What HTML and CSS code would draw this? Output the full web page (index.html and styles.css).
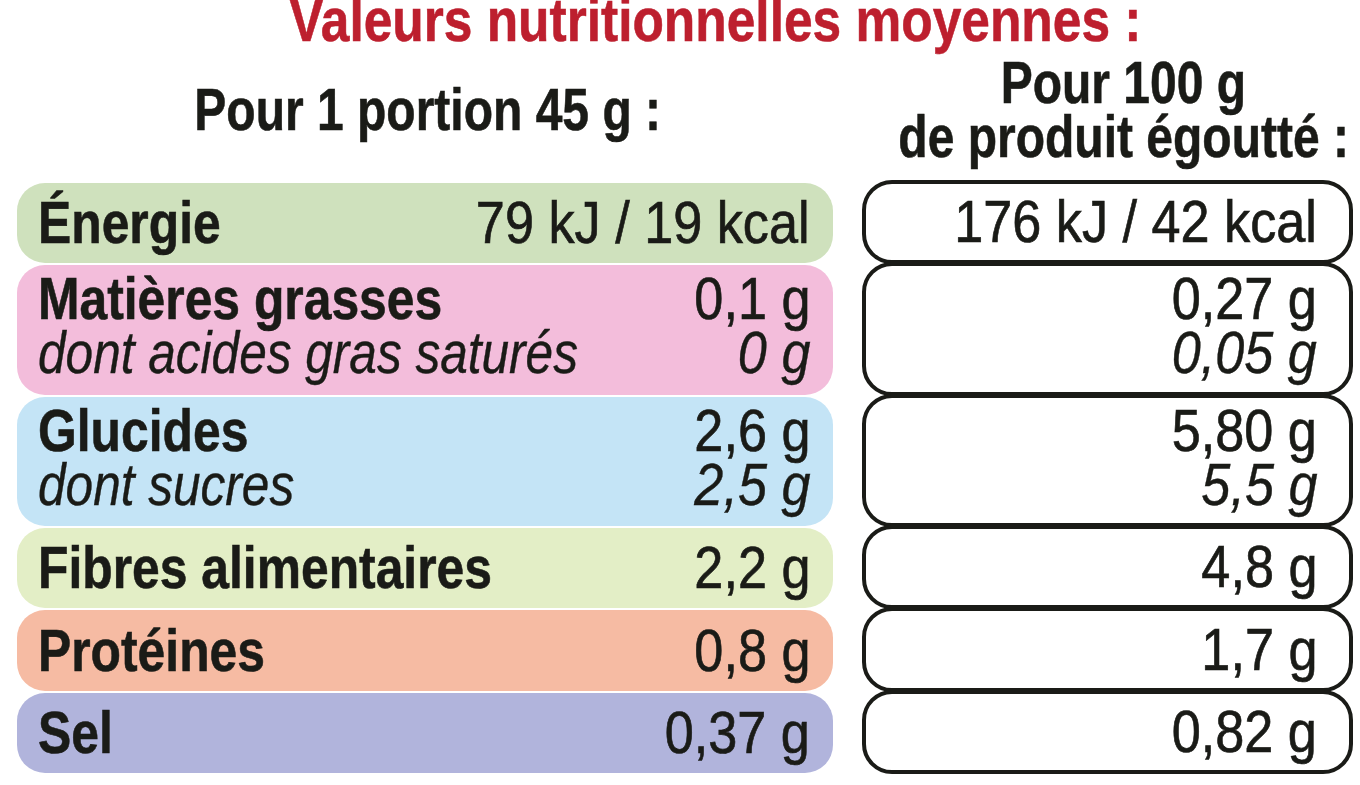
FILE: index.html
```html
<!DOCTYPE html>
<html lang="fr">
<head>
<meta charset="utf-8">
<title>Valeurs nutritionnelles moyennes</title>
<link rel="stylesheet" href="styles.css">
</head>
<body>
<div class="page">
  <div class="title"><span class="title-text">Valeurs nutritionnelles moyennes :</span></div>
  <div class="table">
    <div class="head head-left"><span class="head-line">Pour 1 portion 45 g :</span></div>
    <div class="head head-right">
      <span class="head-line">Pour 100 g</span>
      <span class="head-line">de produit égoutté :</span>
    </div>

    <div class="pill energy">
      <div class="line"><span class="lbl">Énergie</span><span class="val">79 kJ / 19 kcal</span></div>
    </div>
    <div class="box">
      <div class="line"><span class="val">176 kJ / 42 kcal</span></div>
    </div>

    <div class="pill fat double">
      <div class="line"><span class="lbl">Matières grasses</span><span class="val">0,1 g</span></div>
      <div class="line sub"><span class="lbl">dont acides gras saturés</span><span class="val">0 g</span></div>
    </div>
    <div class="box double">
      <div class="line"><span class="val">0,27 g</span></div>
      <div class="line sub"><span class="val">0,05 g</span></div>
    </div>

    <div class="pill carbs double">
      <div class="line"><span class="lbl">Glucides</span><span class="val">2,6 g</span></div>
      <div class="line sub"><span class="lbl">dont sucres</span><span class="val">2,5 g</span></div>
    </div>
    <div class="box double">
      <div class="line"><span class="val">5,80 g</span></div>
      <div class="line sub"><span class="val">5,5 g</span></div>
    </div>

    <div class="pill fibre">
      <div class="line"><span class="lbl">Fibres alimentaires</span><span class="val">2,2 g</span></div>
    </div>
    <div class="box">
      <div class="line"><span class="val">4,8 g</span></div>
    </div>

    <div class="pill protein">
      <div class="line"><span class="lbl">Protéines</span><span class="val">0,8 g</span></div>
    </div>
    <div class="box">
      <div class="line"><span class="val">1,7 g</span></div>
    </div>

    <div class="pill salt">
      <div class="line"><span class="lbl">Sel</span><span class="val">0,37 g</span></div>
    </div>
    <div class="box">
      <div class="line"><span class="val">0,82 g</span></div>
    </div>
  </div>
</div>
</body>
</html>
```
FILE: styles.css
```css
html, body {
  margin: 0;
  padding: 0;
  background: #ffffff;
}

body {
  font-family: "Liberation Sans", Arial, sans-serif;
  color: #1a1b17;
  width: 1360px;
  height: 785px;
  overflow: hidden;
}

.page {
  width: 1360px;
}

/* Title */
.title {
  display: flex;
  justify-content: center;
  margin: -5px 0 0 70px;
  font-size: 62px;
  line-height: 50px;
  font-weight: 700;
  color: #bd1f2e;
  white-space: nowrap;
  -webkit-text-stroke: 0.6px #bd1f2e;
}

.title-text {
  display: inline-block;
  transform: scaleX(0.83);
  transform-origin: center;
}

/* Table */
.table {
  display: grid;
  grid-template-columns: 816px 491px;
  grid-template-rows: auto 82px 132px 131px 82px 83px 82px;
  column-gap: 29px;
  padding-left: 17px;
}

.head {
  display: flex;
  flex-direction: column;
  align-items: center;
  font-size: 60px;
  line-height: 54px;
  font-weight: 700;
  white-space: nowrap;
  -webkit-text-stroke: 0.6px #1a1b17;
}

.head-line {
  display: block;
  transform: scaleX(0.8);
  transform-origin: center;
}

.head-left {
  align-self: center;
  margin-left: 6px;
  padding-bottom: 8px;
}

.head-right {
  margin: 0 0 19px 32px;
  padding-top: 11px;
}

/* Rows */
.line {
  display: flex;
  justify-content: space-between;
  font-size: 60px;
  line-height: 54px;
  white-space: nowrap;
}

.lbl,
.val {
  display: inline-block;
}

.lbl {
  font-weight: 700;
  transform: scaleX(0.83);
  transform-origin: left center;
  -webkit-text-stroke: 0.6px #1a1b17;
}

.val {
  font-weight: 400;
  transform: scaleX(0.87);
  transform-origin: right center;
  -webkit-text-stroke: 0.7px #1a1b17;
}

.sub .lbl,
.sub .val {
  font-weight: 400;
  font-style: italic;
  -webkit-text-stroke: 0.4px #1a1b17;
}

.sub .lbl {
  transform: scaleX(0.826);
}

.pill {
  display: flex;
  flex-direction: column;
  justify-content: center;
  margin-bottom: 2px;
  padding: 0 23px 0 21px;
  border-radius: 28px;
}

.double {
  padding-bottom: 8px;
}

.energy { background: #cfe1bd; }
.fat { background: #f3bddb; }
.carbs { background: #c4e4f6; }
.fibre { background: #e3eec6; }
.protein { background: #f6bba3; }
.salt { background: #b1b4dc; }

.box {
  display: flex;
  flex-direction: column;
  justify-content: center;
  margin: -3px 0 1px 0;
  padding: 0 32px 0 20px;
  border: 4px solid #1a1b17;
  border-radius: 30px;
}

.box.double {
  padding-bottom: 6px;
}

.box .line {
  justify-content: flex-end;
}
```
